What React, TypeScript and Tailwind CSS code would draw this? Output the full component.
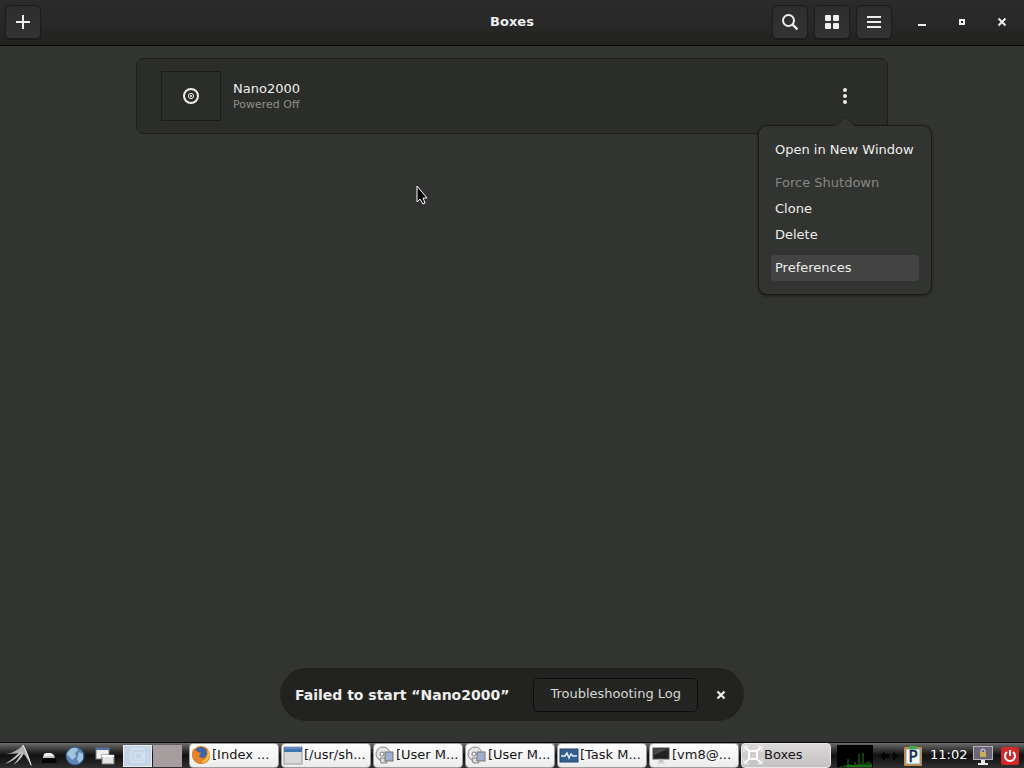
import type { ReactNode } from 'react'

const menuSections = [
  [{ label: 'Open in New Window' }],
  [{ label: 'Force Shutdown', disabled: true }, { label: 'Clone' }, { label: 'Delete' }],
  [{ label: 'Preferences', active: true }],
] as { label: string; disabled?: boolean; active?: boolean }[][]

const tasks: { label: string; icon: ReactNode; active?: boolean }[] = [
  { label: '[Index ...', icon: <FirefoxIcon /> },
  { label: '[/usr/sh...', icon: <WindowIcon /> },
  { label: '[User M...', icon: <DiscIcon /> },
  { label: '[User M...', icon: <DiscIcon /> },
  { label: '[Task M...', icon: <MonitorGraphIcon /> },
  { label: '[vm8@...', icon: <TerminalIcon /> },
  { label: 'Boxes', icon: <BoxesIcon />, active: true },
]

export default function App() {
  return (
    <div className="relative flex min-h-screen flex-col bg-[#323431] font-['DejaVu_Sans',sans-serif] text-[13px] leading-4 text-[#eeeeec]">
      <Header />
      <main className="flex flex-1 flex-col px-4 pt-3">
        <MachineRow />
        <Toast />
      </main>
      <Taskbar />
      <Pointer />
    </div>
  )
}

function Header() {
  return (
    <header className="grid h-[46px] grid-cols-[1fr_auto_1fr] items-center border-b border-[#070707] bg-linear-to-b from-[#2b2b2b] via-[#282828] to-[#21231f] px-[5px] pb-px">
      <div>
        <HeaderButton label="New">
          <path d="M8 1v14M1 8h14" stroke="currentColor" strokeWidth="2" />
        </HeaderButton>
      </div>
      <h1 className="font-bold">Boxes</h1>
      <div className="flex items-center justify-end gap-1.5">
        <HeaderButton label="Search">
          <circle cx="6.5" cy="6.5" r="5.5" fill="none" stroke="currentColor" strokeWidth="2" />
          <path d="M10.5 10.5l5 5" stroke="currentColor" strokeWidth="2.4" />
        </HeaderButton>
        <HeaderButton label="Grid view">
          <g fill="currentColor">
            <rect x="1" y="1" width="6" height="6" rx="1" />
            <rect x="9" y="1" width="6" height="6" rx="1" />
            <rect x="1" y="9" width="6" height="6" rx="1" />
            <rect x="9" y="9" width="6" height="6" rx="1" />
          </g>
        </HeaderButton>
        <HeaderButton label="Main menu">
          <path d="M1 3h14M1 8h14M1 13h14" stroke="currentColor" strokeWidth="2" />
        </HeaderButton>
        <div className="ml-[7px] flex gap-1.5">
          <WindowButton label="Minimize">
            <path d="M4 11h8" stroke="currentColor" strokeWidth="2" />
          </WindowButton>
          <WindowButton label="Maximize">
            <rect x="6" y="6" width="4" height="4" fill="none" stroke="currentColor" strokeWidth="2" />
          </WindowButton>
          <WindowButton label="Close">
            <path d="M4.5 4.5l7 7M11.5 4.5l-7 7" stroke="currentColor" strokeWidth="2" />
          </WindowButton>
        </div>
      </div>
    </header>
  )
}

function HeaderButton({ label, children }: { label: string; children: ReactNode }) {
  return (
    <button
      aria-label={label}
      className="flex h-[34px] w-9 items-center justify-center rounded-[5px] border border-[#1b1c1b] bg-linear-to-b from-[#2d2d2d] to-[#333333] shadow-[0_1px_1px_rgba(0,0,0,0.3)]"
    >
      <svg viewBox="0 0 16 16" className="size-4">
        {children}
      </svg>
    </button>
  )
}

function WindowButton({ label, children }: { label: string; children: ReactNode }) {
  return (
    <button aria-label={label} className="flex h-[34px] w-[34px] items-center justify-center">
      <svg viewBox="0 0 16 16" className="size-4">
        {children}
      </svg>
    </button>
  )
}

function MachineRow() {
  return (
    <section className="mx-auto flex h-[76px] w-full max-w-[752px] items-center rounded-lg border border-[#1c1d1b] bg-[#2b2d2a] pr-[25px] pl-6">
      <div className="flex h-[50px] w-[60px] items-center justify-center border border-[#1c1d1b]">
        <svg viewBox="0 0 16 16" className="size-4">
          <circle cx="8" cy="8" r="7" fill="none" stroke="currentColor" strokeWidth="2" />
          <circle cx="8" cy="8" r="2.6" fill="none" stroke="currentColor" strokeWidth="1" />
          <circle cx="8" cy="8" r="1.1" fill="currentColor" />
        </svg>
      </div>
      <div className="ml-3 flex-1 pt-0.5">
        <h2>Nano2000</h2>
        <p className="text-[11px] leading-4 text-[#8d8e8b]">Powered Off</p>
      </div>
      <div className="relative">
        <button aria-label="Machine menu" className="flex h-[34px] w-[34px] items-center justify-center">
          <svg viewBox="0 0 16 16" className="size-4" fill="currentColor">
            <circle cx="8" cy="2" r="2" />
            <circle cx="8" cy="8" r="2" />
            <circle cx="8" cy="14" r="2" />
          </svg>
        </button>
        <MachineMenu />
      </div>
    </section>
  )
}

function MachineMenu() {
  return (
    <div className="absolute top-full left-1/2 mt-3 w-[174px] -translate-x-1/2 rounded-[9px] border border-[#1a1b19] bg-[#323431] px-3 pt-[11px] pb-[13px] shadow-[0_1px_3px_rgba(0,0,0,0.45)]">
      <svg viewBox="0 0 22 11" className="absolute -top-2.5 left-1/2 h-[11px] w-[22px] -translate-x-1/2">
        <path d="M0 11L11 1l11 10z" fill="#323431" />
        <path d="M1 10L11 1l10 9" fill="none" stroke="#20211f" />
      </svg>
      {menuSections.map((section, i) => (
        <div key={i} className={i > 0 ? 'mt-[7px]' : ''}>
          {section.map((item) => (
            <button
              key={item.label}
              disabled={item.disabled}
              className={`block h-[26px] w-full rounded-[4px] px-1 text-left text-[13px] leading-4 whitespace-nowrap disabled:text-[#868784] ${
                item.active ? 'bg-[#434344]' : ''
              }`}
            >
              {item.label}
            </button>
          ))}
        </div>
      ))}
    </div>
  )
}

function Toast() {
  return (
    <div role="alert" className="mx-auto mt-auto mb-[21px] flex h-[53px] items-center rounded-full bg-[#222321] pr-1.5 pl-[15px]">
      <strong className="text-[14px] leading-4 whitespace-nowrap">Failed to start “Nano2000”</strong>
      <button className="ml-6 h-[34px] rounded-[5px] border border-[#0c0c0c] bg-[#242523] px-4 pb-px whitespace-nowrap text-[#d6d6d4]">
        Troubleshooting Log
      </button>
      <button aria-label="Dismiss" className="ml-1.5 flex h-[34px] w-[34px] items-center justify-center">
        <svg viewBox="0 0 16 16" className="size-4">
          <path d="M4.5 4.5l7 7M11.5 4.5l-7 7" stroke="currentColor" strokeWidth="2.2" />
        </svg>
      </button>
    </div>
  )
}

function Taskbar() {
  return (
    <footer className="flex h-[26px] items-center border-t border-[#0a0a0a] bg-linear-to-b from-[#6d6d6d] via-[#111111] via-50% to-[#303030]">
      <Launchers />
      <nav className="flex h-full min-w-0 flex-1 gap-0.5">
        {tasks.map((task, i) => (
          <button
            key={i}
            className={`flex w-[90px] items-center gap-px rounded-[4px] border pb-0.5 pl-px whitespace-nowrap text-[#151515] ${
              task.active
                ? 'border-[#e8e6e6] bg-linear-to-b from-[#dad8d8] to-[#c4c1c1]'
                : 'border-[#9b9b9b] bg-linear-to-b from-white to-[#ececec]'
            }`}
          >
            <svg viewBox="0 0 20 20" className="size-5 shrink-0">
              {task.icon}
            </svg>
            {task.label}
          </button>
        ))}
      </nav>
      <Tray />
    </footer>
  )
}

function Launchers() {
  return (
    <div className="flex h-full w-[189px] items-center">
      <button aria-label="Applications" className="w-[36px] pl-1">
        <svg viewBox="0 0 30 24" className="h-6 w-[30px]">
          <path d="M2 10C9 9 14 6 19 1c4 6 6 12 9 22-3-5-5-9-9-14-5 0-10 1-17 1z" fill="#aeb0af" />
          <path d="M17 7C12 12 7 16 1 20c6-2 12-6 17-11zM18 9c-3 4-5 8-9 12 5-3 9-7 11-12z" fill="#c4c6c5" />
          <path d="M19 1c3 6 6 13 8 20" stroke="#f0f0f0" fill="none" />
        </svg>
      </button>
      <button aria-label="Files" className="w-6 pl-1">
        <svg viewBox="0 0 20 20" className="size-5">
          <path d="M3 11l1-3 2-1h5l3 2 1 4H3z" fill="#efefef" />
          <path d="M2 12h13l2 5H2z" fill="#050505" />
          <path d="M3 11h11" stroke="#999" />
        </svg>
      </button>
      <button aria-label="Web browser" className="w-[31px] pl-1">
        <svg viewBox="0 0 22 22" className="size-[22px]">
          <circle cx="11" cy="11" r="9" fill="#5c87b5" />
          <path d="M5 6c3-5 8-4 9-1l-3 3 1 4-4 3-3-4-3-1zM15 7l4 2v6l-4 3-2-4z" fill="#a3c2de" />
          <circle cx="11" cy="11" r="9" fill="none" stroke="#35597f" />
        </svg>
      </button>
      <button aria-label="Show desktop" className="w-8 pl-[3px]">
        <svg viewBox="0 0 22 20" className="h-5 w-[22px]">
          <rect x="2" y="2" width="13" height="11" fill="#eeeeec" stroke="#777" />
          <path d="M2 3h13" stroke="#4b6ca5" strokeWidth="2" />
          <rect x="8" y="9" width="12" height="9" fill="#e4e4e2" stroke="#777" />
          <path d="M8 10h12" stroke="#fff" strokeWidth="2" />
        </svg>
      </button>
      <button aria-label="Desktop 1" className="h-[22px] w-[29px] border border-[#e6edf5] bg-[#c5d5e8]">
        <svg viewBox="0 0 27 20" className="h-5 w-[27px]">
          <path d="M7 3h13v13H7zM11 7h7v6h-7z" fill="none" stroke="#dce7f2" />
        </svg>
      </button>
      <button aria-label="Desktop 2" className="ml-px h-[22px] w-[29px] bg-[#a59d9e]" />
    </div>
  )
}

function Tray() {
  return (
    <div className="flex h-full items-center">
      <svg viewBox="0 0 36 22" className="h-[22px] w-9">
        <rect width="36" height="22" fill="#000" />
        <path
          d="M4 22v-1M7 22v-2M9 22v-1M11 22v-8M13 22v-3M15 22v-2M18 22v-5M20 22v-3M22 22v-13M24 22v-4M26 22v-14M28 22v-4M30 22v-5M32 22v-6M34 22v-4"
          stroke="#1c801c"
        />
        <path d="M9 21h26" stroke="#167016" strokeWidth="2" />
      </svg>
      <svg viewBox="0 0 30 22" className="h-[22px] w-[30px]">
        <path d="M7 11l5-5v10zM12 9h4v4h-4zM20 6l5 5-5 5z" fill="#050505" />
      </svg>
      <svg viewBox="0 0 20 22" className="h-[22px] w-5">
        <rect x="1" y="2" width="18" height="19" rx="1" fill="#c98a2e" />
        <rect x="3" y="4" width="14" height="15" fill="#f5f7fa" stroke="#7fa5d0" />
        <rect x="6" y="1" width="8" height="3" rx="1" fill="#38b048" />
        <text x="10" y="17" textAnchor="middle" fontSize="15" fill="#0e2b45" stroke="#0e2b45" strokeWidth="0.5">
          P
        </text>
      </svg>
      <time className="ml-[7px] w-9 pb-0.5 text-white">11:02</time>
      <svg viewBox="0 0 20 22" className="ml-[7px] h-[22px] w-5">
        <rect x="0" y="1" width="20" height="14" fill="#b7b3bb" />
        <rect x="1" y="2" width="18" height="12" fill="#6c6578" />
        <rect x="7" y="7" width="6" height="5" fill="#c8ae5a" />
        <path d="M8 7V5q2-2 4 0v2" fill="none" stroke="#ddd" />
        <path d="M8 15h4v3h3v2H5v-2h3z" fill="#e8e8e8" />
      </svg>
      <button aria-label="Shut down" className="mr-[5px] ml-2">
        <svg viewBox="0 0 18 18" className="size-[18px]">
          <rect width="18" height="18" rx="2" fill="#cf2929" />
          <path d="M6 5a5 5 0 1 0 6 0M9 3v6" fill="none" stroke="#fff" strokeWidth="2" />
        </svg>
      </button>
    </div>
  )
}

function FirefoxIcon() {
  return (
    <>
      <circle cx="10" cy="10" r="9" fill="#d96d1c" />
      <circle cx="10" cy="8" r="6" fill="#3d67a8" />
      <path d="M2 4c2 1 3 2 5 3l3 1-2 3c2 3 6 3 8-1 1-3 0-5-1-7 6 5 5 13-1 15C5 21-1 14 2 4z" fill="#e5842a" />
      <path d="M17 6c2 5-1 10-6 11" fill="none" stroke="#f5c344" strokeWidth="2" />
    </>
  )
}

function WindowIcon() {
  return (
    <>
      <rect x="1" y="2" width="18" height="17" fill="#d9dad8" stroke="#999" />
      <path d="M1 2h18v5H1z" fill="#4272b4" />
      <path d="M2 3h16" stroke="#85a9d6" />
    </>
  )
}

function DiscIcon() {
  return (
    <>
      <circle cx="8" cy="9" r="7" fill="#e6e6e6" stroke="#858585" />
      <circle cx="7" cy="9" r="2" fill="#fff" stroke="#777" />
      <path d="M5 13h5l2 5H6z" fill="#ddd" stroke="#888" />
      <rect x="10" y="7" width="8" height="9" fill="#9eafd1" stroke="#777" />
    </>
  )
}

function MonitorGraphIcon() {
  return (
    <>
      <rect x="1" y="4" width="18" height="13" fill="#335f91" stroke="#274566" />
      <path d="M2 11h4l2-3 2 5 2-4 2 2h4" fill="none" stroke="#e8f0f8" strokeWidth="1.5" />
    </>
  )
}

function TerminalIcon() {
  return (
    <>
      <rect x="2" y="3" width="16" height="11" fill="#222" stroke="#555" />
      <path d="M3 10l14-6H3z" fill="#484848" />
      <path d="M8 15h4v2H8zM6 18h8" fill="#bbb" stroke="#ccc" />
    </>
  )
}

function BoxesIcon() {
  return (
    <>
      <rect x="6" y="6" width="8" height="8" fill="#cfcdcd" stroke="#fff" strokeWidth="2" />
      <path d="M2 2l4 4M18 2l-4 4M2 18l4-4M18 18l-4-4" stroke="#fff" strokeWidth="2" />
      <path d="M1 7V1h5M14 1h5v6M1 13v6h5M14 19h5v-6" fill="none" stroke="#f3f2f2" />
    </>
  )
}

function Pointer() {
  return (
    <svg viewBox="0 0 12 20" className="pointer-events-none absolute top-[185px] left-[416px] h-5 w-3">
      <path d="M1 1v16l3-3 3 5 2-1-2-5h4z" fill="#000" stroke="#fff" />
    </svg>
  )
}
